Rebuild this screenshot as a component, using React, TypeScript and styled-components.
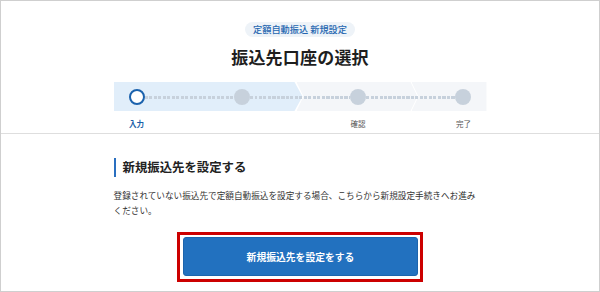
import React from "react";
import styled, { createGlobalStyle } from "styled-components";

const GlobalStyle = createGlobalStyle`
  html, body {
    margin: 0;
    padding: 0;
    background: #ffffff;
  }
  body {
    font-family: "Noto Sans CJK JP", "Noto Sans", sans-serif;
    color: #222;
  }
`;

const Frame = styled.div`
  width: 600px;
  height: 292px;
  box-sizing: border-box;
  border: 1px solid #cfcfcf;
  display: flex;
  flex-direction: column;
  overflow: hidden;
`;

const TopSection = styled.section`
  display: flex;
  flex-direction: column;
  align-items: center;
  padding-top: 21px;
`;

const Badge = styled.div`
  height: 15px;
  line-height: 15px;
  padding: 0 8px;
  border-radius: 8px;
  background: #eef3f8;
  color: #2466b0;
  font-size: 9.2px;
  font-weight: 500;
`;

const Title = styled.h1`
  margin: 9.5px 0 0;
  font-size: 17px;
  line-height: 20px;
  font-weight: 700;
  color: #1e1e1e;
  letter-spacing: 0.2px;
`;

const Stepper = styled.div`
  position: relative;
  width: 373px;
  height: 51px;
  margin-top: 15.5px;
`;

const Track = styled.div`
  display: flex;
  height: 29px;
`;

const Segment = styled.div<{ $w: number; $active?: boolean; $first?: boolean }>`
  width: ${(p) => p.$w}px;
  flex: none;
  margin-left: ${(p) => (p.$first ? 0 : -6)}px;
  background: ${(p) => (p.$active ? "#e1eefa" : "#f4f6f9")};
  clip-path: ${(p) =>
    p.$first
      ? "polygon(0 0, calc(100% - 8px) 0, 100% 50%, calc(100% - 8px) 100%, 0 100%)"
      : "polygon(0 0, calc(100% - 7px) 0, 100% 50%, calc(100% - 7px) 100%, 0 100%, 7px 50%)"};
`;

const LastSegment = styled(Segment)`
  clip-path: polygon(0 0, 100% 0, 100% 100%, 0 100%, 7px 50%);
`;

const Steps = styled.div`
  position: absolute;
  top: 0;
  left: 0;
  right: 0;
  display: flex;
  align-items: flex-start;
  padding-left: 15px;
`;

const Step = styled.div`
  width: 16px;
  flex: none;
  display: flex;
  flex-direction: column;
  align-items: center;
  padding-top: 7px;
`;

const Dot = styled.div<{ $current?: boolean }>`
  width: 16px;
  height: 16px;
  box-sizing: border-box;
  border-radius: 50%;
  background: ${(p) => (p.$current ? "#ffffff" : "#c7d1dc")};
  border: ${(p) => (p.$current ? "2px solid #1b62ad" : "none")};
`;

const Label = styled.div<{ $current?: boolean }>`
  margin-top: 14px;
  height: 10px;
  font-size: 7.5px;
  line-height: 10px;
  white-space: nowrap;
  color: ${(p) => (p.$current ? "#1b5fa8" : "#555")};
  font-weight: ${(p) => (p.$current ? 700 : 400)};
`;

const Connector = styled.div<{ $w: number }>`
  width: ${(p) => p.$w}px;
  flex: none;
  height: 3px;
  margin-top: 14px;
  background: repeating-linear-gradient(
    to right,
    #c7d1dc 0,
    #c7d1dc 3px,
    transparent 3px,
    transparent 4.5px
  );
`;

const BottomSection = styled.section`
  border-top: 1px solid #dedede;
  display: flex;
  flex-direction: column;
  align-items: center;
  padding-top: 24px;
`;

const Content = styled.div`
  width: 373px;
  display: flex;
  flex-direction: column;
`;

const Heading = styled.h2`
  margin: 0;
  border-left: 2px solid #2a6fc0;
  padding-left: 7px;
  font-size: 12.4px;
  line-height: 19px;
  font-weight: 700;
  color: #222;
`;

const Body = styled.p`
  margin: 10.5px 0 0;
  width: 368px;
  font-size: 8.65px;
  line-height: 15px;
  color: #333;
`;

const Highlight = styled.div`
  align-self: center;
  margin-top: 14.5px;
  width: 246px;
  height: 50px;
  box-sizing: border-box;
  border: 3px solid #cc0000;
  padding: 2px 2px 3px 3px;
  display: flex;
`;

const PrimaryButton = styled.button`
  flex: 1;
  border: 1px solid #1c64ad;
  border-radius: 3px;
  background: #2271bf;
  color: #ffffff;
  font-family: inherit;
  font-size: 9.8px;
  font-weight: 700;
  cursor: pointer;
  padding: 0;
`;

const steps = [
  { label: "入力", current: true },
  { label: "" },
  { label: "確認" },
  { label: "完了" },
];
const gaps = [89, 100.6, 89.4];

export default function App() {
  return (
    <>
      <GlobalStyle />
      <Frame>
        <TopSection>
          <Badge>定額自動振込 新規設定</Badge>
          <Title>振込先口座の選択</Title>
          <Stepper>
            <Track>
              <Segment $w={189} $active $first />
              <Segment $w={121} />
              <LastSegment $w={75} />
            </Track>
            <Steps>
              {steps.map((s, i) => (
                <React.Fragment key={i}>
                  <Step>
                    <Dot $current={s.current} />
                    <Label $current={s.current}>{s.label}</Label>
                  </Step>
                  {i < gaps.length && <Connector $w={gaps[i]} />}
                </React.Fragment>
              ))}
            </Steps>
          </Stepper>
        </TopSection>
        <BottomSection>
          <Content>
            <Heading>新規振込先を設定する</Heading>
            <Body>
              登録されていない振込先で定額自動振込を設定する場合、こちらから新規設定手続きへお進みください。
            </Body>
            <Highlight>
              <PrimaryButton>新規振込先を設定をする</PrimaryButton>
            </Highlight>
          </Content>
        </BottomSection>
      </Frame>
    </>
  );
}
